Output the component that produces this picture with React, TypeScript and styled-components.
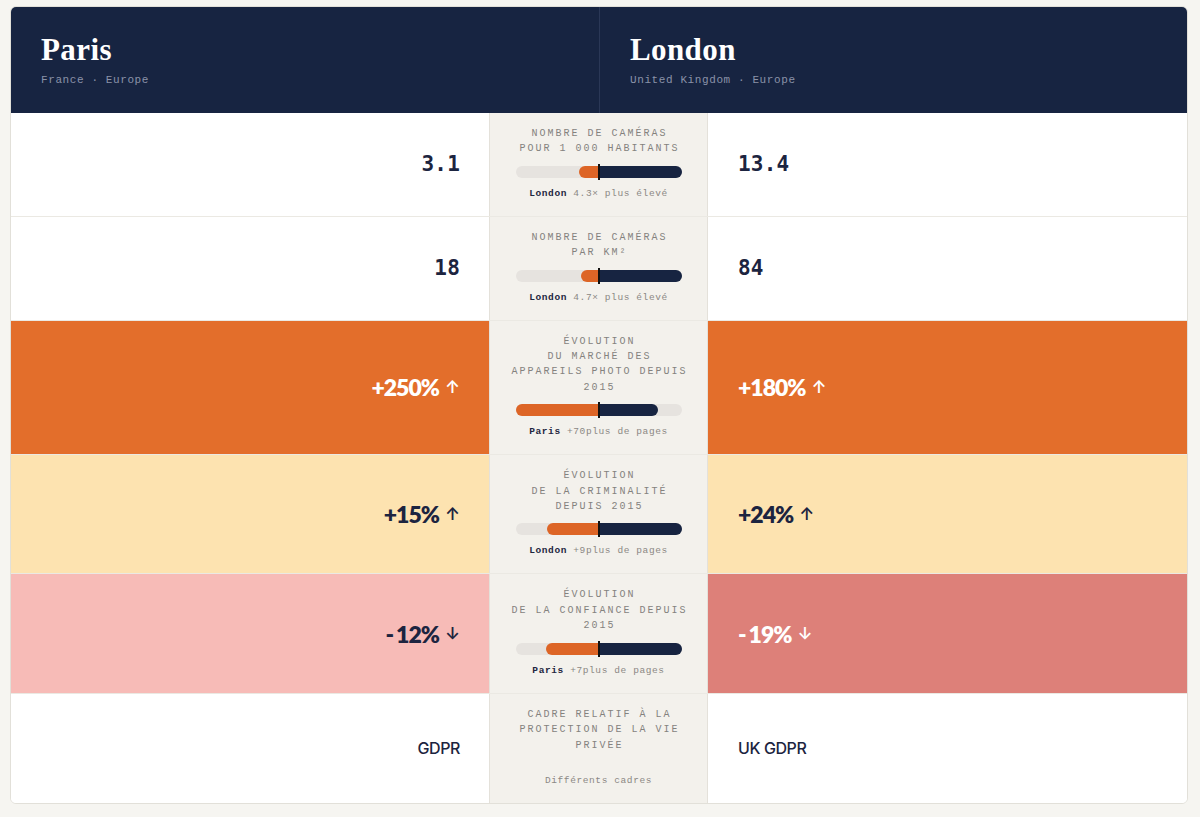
import React from "react";
import styled, { createGlobalStyle } from "styled-components";

const GlobalStyle = createGlobalStyle`
  html, body { margin: 0; padding: 0; background: #f6f5f1; }
  body { font-family: Inter, "Noto Sans", sans-serif; }
`;

const Page = styled.div`
  padding: 6px 12px 14px 10px;
`;

const Card = styled.div`
  border: 1px solid #e2e0d9;
  border-radius: 6px;
  overflow: hidden;
  background: #ffffff;
`;

const Header = styled.div`
  display: grid;
  grid-template-columns: 1fr 1fr;
  background: #172441;
  height: 106px;
`;

const HeaderCell = styled.div<{ $divider?: boolean }>`
  padding: 26px 30px 0;
  border-left: ${(p) => (p.$divider ? "1px solid #2a3756" : "none")};
`;

const CityName = styled.div`
  font-family: "Liberation Serif", "DejaVu Serif", serif;
  font-weight: 700;
  font-size: 31px;
  line-height: 34px;
  letter-spacing: 0.4px;
  color: #ffffff;
`;

const CitySub = styled.div`
  margin-top: 7px;
  font-family: "Liberation Mono", "DejaVu Sans Mono", monospace;
  font-size: 11px;
  letter-spacing: 0.6px;
  color: #8a92a8;
`;

const Row = styled.div<{ $last?: boolean }>`
  display: grid;
  grid-template-columns: 478px 219px 1fr;
  border-bottom: ${(p) => (p.$last ? "none" : "1px solid #ebe9e3")};
`;

const ValueCell = styled.div<{ $side: "left" | "right"; $bg: string; $fg: string }>`
  display: flex;
  align-items: center;
  justify-content: ${(p) => (p.$side === "left" ? "flex-end" : "flex-start")};
  padding: ${(p) => (p.$side === "left" ? "0 29px 0 0" : "0 0 0 30px")};
  background: ${(p) => p.$bg};
  color: ${(p) => p.$fg};
`;

const MonoValue = styled.span`
  font-family: "DejaVu Sans Mono", "Liberation Mono", monospace;
  font-weight: 700;
  font-size: 21px;
  letter-spacing: 0.2px;
`;

const PctValue = styled.span`
  font-family: Lato, Inter, sans-serif;
  font-weight: 800;
  font-size: 23px;
  letter-spacing: -1px;
  display: inline-flex;
  align-items: center;
`;

const Sign = styled.span<{ $minus?: boolean }>`
  margin-right: ${(p) => (p.$minus ? "3px" : "0")};
`;

const Arrow = styled.span`
  font-family: Inter, "DejaVu Sans", sans-serif;
  font-weight: 600;
  font-size: 17px;
  letter-spacing: 0;
  margin-left: 6px;
`;

const TextValue = styled.span`
  font-family: Inter, sans-serif;
  font-weight: 500;
  font-size: 16px;
  letter-spacing: -0.4px;
`;

const MiddleCell = styled.div`
  background: #f3f1ec;
  border-left: 1px solid #e4e1da;
  border-right: 1px solid #e4e1da;
  padding: 13px 0 15px;
  display: flex;
  flex-direction: column;
  align-items: center;
`;

const Label = styled.div`
  font-family: "Liberation Mono", "DejaVu Sans Mono", monospace;
  font-size: 10px;
  line-height: 15.4px;
  letter-spacing: 2px;
  text-transform: uppercase;
  color: #84827e;
  text-align: center;
`;

const LabelLine = styled.div`
  margin-right: -2px;
`;

const BarTrack = styled.div`
  position: relative;
  margin-top: 9px;
  width: 166px;
  height: 12px;
  border-radius: 6px;
  background: #e6e3df;
`;

const BarLeft = styled.div`
  position: absolute;
  right: 50%;
  top: 0;
  height: 100%;
  background: #dd6526;
  border-radius: 6px 0 0 6px;
`;

const BarRight = styled.div`
  position: absolute;
  left: 50%;
  top: 0;
  height: 100%;
  background: #172441;
  border-radius: 0 6px 6px 0;
`;

const BarMarker = styled.div`
  position: absolute;
  left: 50%;
  top: -2px;
  width: 2px;
  margin-left: -1px;
  height: 16px;
  background: #111111;
`;

const Caption = styled.div<{ $gap?: number }>`
  margin-top: ${(p) => (p.$gap ?? 9)}px;
  font-family: "Liberation Mono", "DejaVu Sans Mono", monospace;
  font-size: 9.5px;
  line-height: 14px;
  letter-spacing: 0.6px;
  color: #8b8884;
`;

const CaptionStrong = styled.strong`
  font-weight: 700;
  color: #1e2640;
`;

type Metric = {
  label: string[];
  left: React.ReactNode;
  right: React.ReactNode;
  leftBg: string;
  rightBg: string;
  leftFg: string;
  rightFg: string;
  bar?: { l: number; r: number };
  winner: string;
  note: string;
};

const NAVY = "#1c2440";
const HALF = 83;

const pct = (sign: "+" | "-", v: string, up: boolean) => (
  <PctValue>
    <Sign $minus={sign === "-"}>{sign}</Sign>
    {v}
    <Arrow>{up ? "↑" : "↓"}</Arrow>
  </PctValue>
);

const metrics: Metric[] = [
  {
    label: ["Nombre de caméras", "pour 1 000 habitants"],
    left: <MonoValue>3.1</MonoValue>,
    right: <MonoValue>13.4</MonoValue>,
    leftBg: "#ffffff",
    rightBg: "#ffffff",
    leftFg: NAVY,
    rightFg: NAVY,
    bar: { l: 3.1, r: 13.4 },
    winner: "London",
    note: "4.3× plus élevé",
  },
  {
    label: ["Nombre de caméras", "par km²"],
    left: <MonoValue>18</MonoValue>,
    right: <MonoValue>84</MonoValue>,
    leftBg: "#ffffff",
    rightBg: "#ffffff",
    leftFg: NAVY,
    rightFg: NAVY,
    bar: { l: 18, r: 84 },
    winner: "London",
    note: "4.7× plus élevé",
  },
  {
    label: ["Évolution", "du marché des", "appareils photo depuis", "2015"],
    left: pct("+", "250%", true),
    right: pct("+", "180%", true),
    leftBg: "#e36e2b",
    rightBg: "#e36e2b",
    leftFg: "#ffffff",
    rightFg: "#ffffff",
    bar: { l: 250, r: 180 },
    winner: "Paris",
    note: "+70plus de pages",
  },
  {
    label: ["Évolution", "de la criminalité", "depuis 2015"],
    left: pct("+", "15%", true),
    right: pct("+", "24%", true),
    leftBg: "#fde3b0",
    rightBg: "#fde3b0",
    leftFg: NAVY,
    rightFg: NAVY,
    bar: { l: 15, r: 24 },
    winner: "London",
    note: "+9plus de pages",
  },
  {
    label: ["Évolution", "de la confiance depuis", "2015"],
    left: pct("-", "12%", false),
    right: pct("-", "19%", false),
    leftBg: "#f7bbb7",
    rightBg: "#dd8079",
    leftFg: NAVY,
    rightFg: "#ffffff",
    bar: { l: 12, r: 19 },
    winner: "Paris",
    note: "+7plus de pages",
  },
  {
    label: ["Cadre relatif à la", "protection de la vie", "privée"],
    left: <TextValue>GDPR</TextValue>,
    right: <TextValue>UK GDPR</TextValue>,
    leftBg: "#ffffff",
    rightBg: "#ffffff",
    leftFg: NAVY,
    rightFg: NAVY,
    winner: "",
    note: "Différents cadres",
  },
];

const Bar = ({ l, r }: { l: number; r: number }) => {
  const max = Math.max(l, r);
  return (
    <BarTrack>
      <BarLeft style={{ width: `${(l / max) * HALF}px` }} />
      <BarRight style={{ width: `${(r / max) * HALF}px` }} />
      <BarMarker />
    </BarTrack>
  );
};

export default function App() {
  return (
    <Page>
      <GlobalStyle />
      <Card>
        <Header>
          <HeaderCell>
            <CityName>Paris</CityName>
            <CitySub>France · Europe</CitySub>
          </HeaderCell>
          <HeaderCell $divider>
            <CityName>London</CityName>
            <CitySub>United Kingdom · Europe</CitySub>
          </HeaderCell>
        </Header>
        {metrics.map((m, i) => (
          <Row key={i} $last={i === metrics.length - 1}>
            <ValueCell $side="left" $bg={m.leftBg} $fg={m.leftFg}>
              {m.left}
            </ValueCell>
            <MiddleCell>
              <Label>
                {m.label.map((line, j) => (
                  <LabelLine key={j}>{line}</LabelLine>
                ))}
              </Label>
              {m.bar && <Bar l={m.bar.l} r={m.bar.r} />}
              <Caption $gap={m.bar ? 9 : 21}>
                {m.winner && <CaptionStrong>{m.winner}</CaptionStrong>}
                {m.winner ? " " : ""}
                {m.note}
              </Caption>
            </MiddleCell>
            <ValueCell $side="right" $bg={m.rightBg} $fg={m.rightFg}>
              {m.right}
            </ValueCell>
          </Row>
        ))}
      </Card>
    </Page>
  );
}
